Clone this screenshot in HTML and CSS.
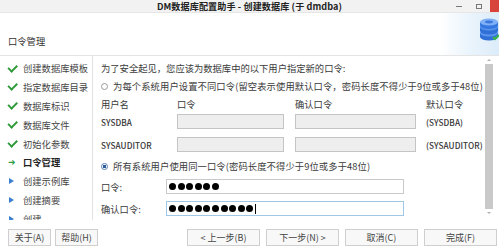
FILE: index.html
```html
<!DOCTYPE html>
<html lang="zh-CN">
<head>
<meta charset="utf-8">
<link rel="stylesheet" href="styles.css">
</head>
<body>
<div class="window">
  <div class="titlebar">
    <div></div>
    <div class="title">DM数据库配置助手 - 创建数据库 (于 dmdba)</div>
    <div class="controls">
      <span class="ctl-min"></span>
      <span class="ctl-max"></span>
      <span class="ctl-close"></span>
    </div>
  </div>
  <div class="header">
    <div class="heading">口令管理</div>
    <div class="logo">
      <svg width="24" height="24" viewBox="0 0 24 24">
        <ellipse cx="13" cy="19" rx="9" ry="3.5" fill="#2f6fd6"/>
        <rect x="4" y="15" width="18" height="4" fill="#2f6fd6"/>
        <ellipse cx="13" cy="15" rx="9" ry="3.5" fill="#5b95ee"/>
        <ellipse cx="13" cy="13" rx="9" ry="3.5" fill="#2f6fd6"/>
        <rect x="4" y="9" width="18" height="4" fill="#2f6fd6"/>
        <ellipse cx="13" cy="9" rx="9" ry="3.5" fill="#5b95ee"/>
        <ellipse cx="13" cy="7.5" rx="9" ry="3.5" fill="#3477e0"/>
        <rect x="4" y="4" width="18" height="3.5" fill="#3477e0"/>
        <ellipse cx="13" cy="4" rx="9" ry="3.5" fill="#7fb0f5"/>
        <ellipse cx="13" cy="4" rx="4" ry="1.4" fill="#3a78dc"/>
        <path d="M17 19 l2 2 l4 -4" stroke="#3bb54a" stroke-width="2" fill="none"/>
      </svg>
    </div>
  </div>
  <div class="main">
    <nav class="nav">
      <div class="step done"><span class="mark check"></span>创建数据库模板</div>
      <div class="step done"><span class="mark check"></span>指定数据库目录</div>
      <div class="step done"><span class="mark check"></span>数据库标识</div>
      <div class="step done"><span class="mark check"></span>数据库文件</div>
      <div class="step done"><span class="mark check"></span>初始化参数</div>
      <div class="step current"><span class="mark arrow">➜</span>口令管理</div>
      <div class="step todo"><span class="mark tri"></span>创建示例库</div>
      <div class="step todo"><span class="mark tri"></span>创建摘要</div>
      <div class="step todo"><span class="mark tri"></span>创建</div>
    </nav>
    <section class="content">
      <div class="line intro">为了安全起见，您应该为数据库中的以下用户指定新的口令:</div>
      <div class="line radio-line"><span class="radio"></span>为每个系统用户设置不同口令(留空表示使用默认口令，密码长度不得少于9位或多于48位)</div>
      <div class="grid head">
        <span>用户名</span><span>口令</span><span>确认口令</span><span>默认口令</span>
      </div>
      <div class="grid row row1">
        <span class="latin">SYSDBA</span><span class="field disabled"></span><span class="field disabled"></span><span class="latin">(SYSDBA)</span>
      </div>
      <div class="grid row row2">
        <span class="latin">SYSAUDITOR</span><span class="field disabled"></span><span class="field disabled"></span><span class="latin">(SYSAUDITOR)</span>
      </div>
      <div class="line radio-line radio2"><span class="radio checked"></span>所有系统用户使用同一口令(密码长度不得少于9位或多于48位)</div>
      <div class="pwrow pw1">
        <span>口令:</span>
        <span class="field wide"><i></i><i></i><i></i><i></i><i></i><i></i></span>
      </div>
      <div class="pwrow pw2">
        <span>确认口令:</span>
        <span class="field wide focus"><i></i><i></i><i></i><i></i><i></i><i></i><i></i><i></i><i></i><i></i><b class="caret"></b></span>
      </div>
    </section>
    <div class="scrollbar">
      <span class="arrow-up"></span>
      <span class="thumb"></span>
      <span class="arrow-down"></span>
    </div>
  </div>
  <div class="footer">
    <div class="group">
      <button class="btn small">关于(A)</button>
      <button class="btn small">帮助(H)</button>
    </div>
    <div class="group right">
      <button class="btn">&lt; 上一步(B)</button>
      <button class="btn">下一步(N) &gt;</button>
      <button class="btn">取消(C)</button>
      <button class="btn">完成(F)</button>
    </div>
  </div>
</div>
</body>
</html>
```

FILE: styles.css
```css
* { box-sizing: border-box; }
html, body { margin: 0; padding: 0; background: #fff; }
body {
  width: 499px;
  height: 249px;
  overflow: hidden;
  font-family: "Noto Sans CJK SC", "Noto Sans", sans-serif;
  font-size: 9.3px;
  color: #3a3a3a;
}
.window { width: 499px; height: 249px; display: flex; flex-direction: column; }

.titlebar {
  height: 13px;
  background: #f2f2f2;
  display: grid;
  grid-template-columns: 1fr auto 1fr;
  align-items: center;
  border-bottom: 1px solid #e6e6e6;
}
.title { font-weight: bold; font-size: 9.1px; color: #222; line-height: 12px; letter-spacing: 0.1px; }
.controls { justify-self: end; display: flex; align-items: center; height: 12px; }
.ctl-min { width: 6px; height: 1px; background: #777; margin-right: 14px; }
.ctl-max { width: 6px; height: 5px; border: 1px solid #777; margin-right: 8px; }
.ctl-close { width: 9px; height: 12px; background: #d8443c; }

.header {
  height: 43px;
  display: flex;
  justify-content: space-between;
  background: linear-gradient(90deg, #fff 0, #fff 440px, #eaf4fc 470px, #dcecfa 499px);
  border-bottom: 1px solid #e4e4e4;
}
.heading { padding: 21px 0 0 8px; line-height: 14px; color: #333; }
.logo { padding: 5px 0 0 0; width: 23px; overflow: hidden; }

.main { display: flex; height: 164px; }
.nav {
  width: 93px;
  border-right: 1px solid #e2e2e2;
  padding-top: 3px;
  overflow: hidden;
}
.step {
  height: 18.8px;
  display: flex;
  align-items: center;
  padding-left: 8px;
  color: #444;
  white-space: nowrap;
}
.mark { width: 15px; display: inline-flex; align-items: center; }
.check::before {
  content: "";
  width: 7px; height: 3.5px;
  border-left: 2px solid #2f9a3a;
  border-bottom: 2px solid #2f9a3a;
  transform: rotate(-45deg) translate(1px, -1px);
}
.arrow { color: #2fa04a; font-size: 9px; font-weight: bold; font-family: "DejaVu Sans", sans-serif; }
.current { font-weight: bold; color: #222; }
.tri::before {
  content: "";
  margin-left: 1px;
  border-left: 5px solid #3a7fd0;
  border-top: 3.5px solid transparent;
  border-bottom: 3.5px solid transparent;
}

.content { flex: 1; padding: 3px 0 0 8px; overflow: hidden; white-space: nowrap; }
.line { height: 18px; display: flex; align-items: center; }
.radio-line { letter-spacing: 0.1px; }
.radio {
  width: 7px; height: 7px; border-radius: 50%;
  border: 1px solid #9a9a9a; background: #fff;
  margin: 0 5px 0 0;
  display: inline-block;
}
.radio.checked { border-color: #5a7fb0; background: radial-gradient(circle, #2d5c9a 0, #2d5c9a 1.6px, #fff 2px); }

.grid { display: grid; grid-template-columns: 65px 107px 120px auto; column-gap: 11px; align-items: center; }
.grid > :nth-child(3) { margin-right: -1px; }
.head { height: 14px; margin-top: 2px; }
.row { height: 15px; }
.row1 { margin-top: 3px; }
.row2 { margin-top: 8px; }
.latin { font-size: 8.2px; letter-spacing: 0.1px; font-weight: 500; color: #333; }
.field { display: block; height: 15px; border: 1px solid #c9c9c9; background: #fff; }
.field.disabled { background: #eeeeee; border-color: #c4c4c4; }

.radio2 { height: 14px; margin-top: 7px; }
.pwrow { display: grid; grid-template-columns: 65px 238px; align-items: center; height: 15px; }
.pw1 { margin-top: 6px; }
.pw2 { margin-top: 7px; }
.field.wide { display: flex; align-items: center; padding-left: 2px; gap: 1.6px; }
.field.wide i { width: 7px; height: 7px; border-radius: 50%; background: #000; display: block; }
.field.focus { border-color: #9fc7e6; }
.caret { width: 1px; height: 10px; background: #000; margin-left: 0; display: block; }

.scrollbar {
  width: 15px;
  padding: 3px 6px 6px 0;
  display: flex;
  flex-direction: column;
  align-items: center;
}
.arrow-up, .arrow-down { width: 0; height: 0; border-left: 2px solid transparent; border-right: 2px solid transparent; }
.arrow-up { border-bottom: 2px solid #b0b0b0; margin-bottom: 3px; }
.arrow-down { border-top: 2px solid #b0b0b0; margin-top: 3px; }
.thumb { width: 8px; flex: 1; background: #c9c9c9; }

.footer {
  flex: 1;
  display: flex;
  justify-content: space-between;
  align-items: flex-start;
  padding: 9px 2px 0 8px;
}
.group { display: flex; gap: 4px; }
.group.right { gap: 6px; }
.btn {
  font-family: inherit;
  font-size: 9px;
  color: #444;
  height: 17px;
  width: 73px;
  padding: 0;
  border: 1px solid #cfcfcf;
  background: #f8f8f8;
  line-height: 15px;
}
.btn.small { width: 43px; }
```
